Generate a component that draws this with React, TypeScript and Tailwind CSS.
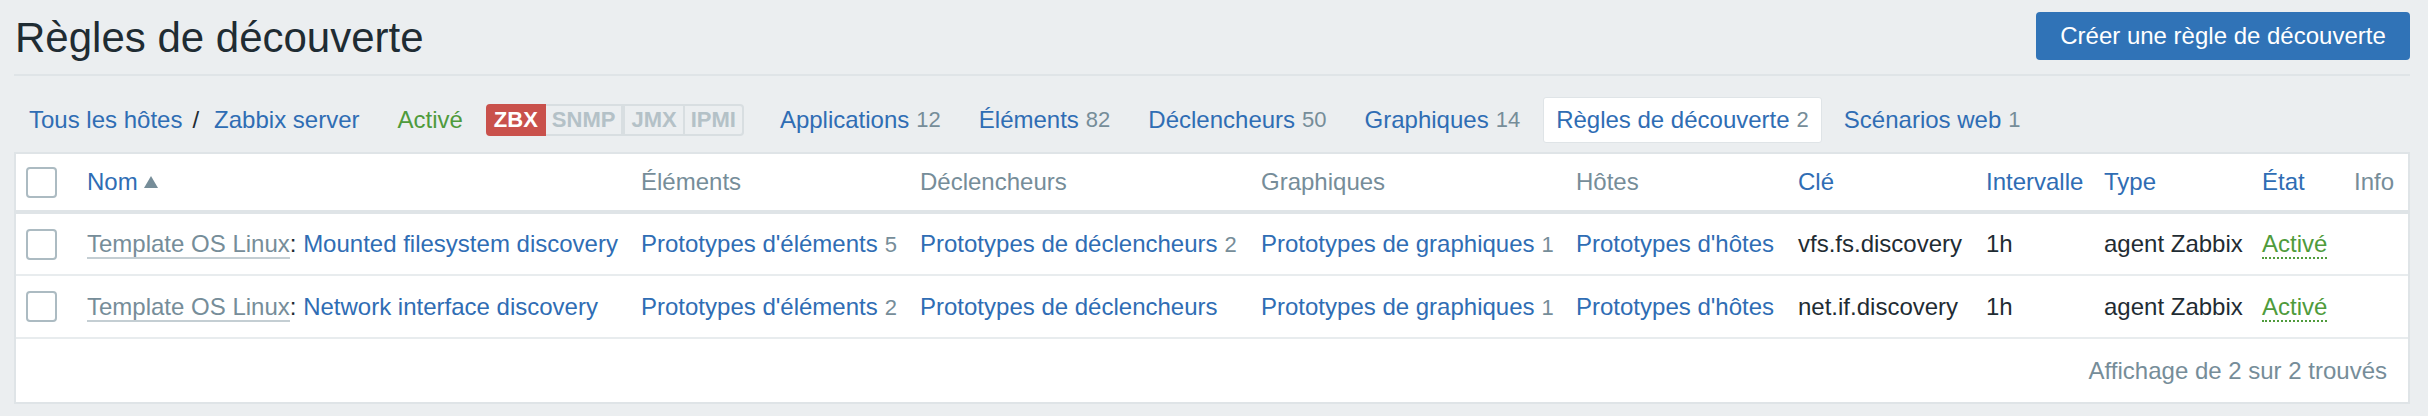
import type { FC, ReactNode } from 'react'

const font = { fontFamily: '"Liberation Sans", Arial, Helvetica, sans-serif' }

interface NavItemProps {
  label: string
  count?: number
  active?: boolean
  className?: string
}

const NavItem: FC<NavItemProps> = ({ label, count, active, className = '' }) => (
  <span
    className={`flex items-center h-[46px] px-[12px] border rounded-[3px] ${
      active ? 'bg-white border-[#dfe4e7]' : 'border-transparent'
    } ${className}`}
  >
    <span className="text-[#2f6db4]">{label}</span>
    {count !== undefined && <span className="ml-[7px] text-[22px] text-[#768d99]">{count}</span>}
  </span>
)

const Checkbox: FC = () => (
  <span className="block w-[31px] h-[31px] border-2 border-[#acbbc2] rounded-[4px] bg-white" />
)

const Link: FC<{ children: ReactNode; count?: number }> = ({ children, count }) => (
  <>
    <span className="text-[#2f6db4]">{children}</span>
    {count !== undefined && <span className="ml-[7px] text-[22px] text-[#768d99]">{count}</span>}
  </>
)

interface Rule {
  name: string
  items: number
  triggers?: number
  graphs: number
  key: string
}

const rules: Rule[] = [
  { name: 'Mounted filesystem discovery', items: 5, triggers: 2, graphs: 1, key: 'vfs.fs.discovery' },
  { name: 'Network interface discovery', items: 2, graphs: 1, key: 'net.if.discovery' },
]

export default function App() {
  return (
    <div style={font} className="min-h-[416px] bg-[#ebeef0] pl-[14px] pr-[18px] pb-[13px] text-[24px] text-[#1f2c33]">
      {/* Header */}
      <div className="flex items-start justify-between h-[76px] border-b-2 border-[#dfe4e7]">
        <h1 className="mt-[14px] ml-[1px] text-[42px] leading-[48px] font-normal">Règles de découverte</h1>
        <button className="mt-[12px] h-[48px] w-[374px] rounded-[4px] bg-[#3073b7] text-white text-[24px]">
          Créer une règle de découverte
        </button>
      </div>

      {/* Navigation */}
      <div className="flex items-center h-[76px] pt-[21px] pb-[9px] leading-[28px]">
        <span className="ml-[15px] text-[#2f6db4]">Tous les hôtes</span>
        <span className="ml-[10px] mr-[15px]">/</span>
        <span className="text-[#2f6db4]">Zabbix server</span>
        <span className="ml-[38px] text-[#4f9b3c]">Activé</span>
        <span className="ml-[23px] flex h-[32px] text-[22px] leading-[28px] font-bold">
          <span className="px-[6px] border-2 border-[#c9514c] bg-[#c9514c] text-white rounded-l-[4px]">ZBX</span>
          <span className="px-[6px] border-2 border-l-0 border-[#d8dee1] text-[#b4c1c7]">SNMP</span>
          <span className="px-[6px] border-2 border-l-2 border-[#d8dee1] text-[#b4c1c7]">JMX</span>
          <span className="px-[6px] border-2 border-l-0 border-[#d8dee1] text-[#b4c1c7] rounded-r-[4px]">IPMI</span>
        </span>
        <NavItem className="ml-[23px]" label="Applications" count={12} />
        <NavItem className="ml-[12px]" label="Éléments" count={82} />
        <NavItem className="ml-[12px]" label="Déclencheurs" count={50} />
        <NavItem className="ml-[12px]" label="Graphiques" count={14} />
        <NavItem className="ml-[10px]" label="Règles de découverte" count={2} active />
        <NavItem className="ml-[9px]" label="Scénarios web" count={1} />
      </div>

      {/* Table */}
      <div className="bg-white border-2 border-[#dfe4e7]">
        <table className="w-full table-fixed border-collapse">
          <colgroup>
            <col className="w-[61px]" />
            <col className="w-[554px]" />
            <col className="w-[279px]" />
            <col className="w-[341px]" />
            <col className="w-[315px]" />
            <col className="w-[222px]" />
            <col className="w-[188px]" />
            <col className="w-[118px]" />
            <col className="w-[158px]" />
            <col className="w-[92px]" />
            <col />
          </colgroup>
          <thead>
            <tr className="h-[58px] border-b-4 border-[#dfe4e7] text-left">
              <th className="px-[10px] font-normal"><Checkbox /></th>
              <th className="px-[10px] font-normal text-[#2f6db4] whitespace-nowrap">
                Nom
                <svg className="inline-block ml-[6px] mb-[3px]" width="14" height="12" viewBox="0 0 14 12">
                  <polygon points="7,0 14,12 0,12" fill="#768d99" />
                </svg>
              </th>
              <th className="px-[10px] font-normal text-[#768d99]">Éléments</th>
              <th className="px-[10px] font-normal text-[#768d99]">Déclencheurs</th>
              <th className="px-[10px] font-normal text-[#768d99]">Graphiques</th>
              <th className="px-[10px] font-normal text-[#768d99]">Hôtes</th>
              <th className="px-[10px] font-normal text-[#2f6db4]">Clé</th>
              <th className="px-[10px] font-normal text-[#2f6db4]">Intervalle</th>
              <th className="px-[10px] font-normal text-[#2f6db4]">Type</th>
              <th className="px-[10px] font-normal text-[#2f6db4]">État</th>
              <th className="px-[10px] font-normal text-[#768d99]">Info</th>
            </tr>
          </thead>
          <tbody>
            {rules.map((rule) => (
              <tr key={rule.key} className="h-[63px] border-b-2 border-[#e8ecee] whitespace-nowrap">
                <td className="px-[10px]"><Checkbox /></td>
                <td className="px-[10px]">
                  <span className="text-[#768d99] border-b-2 border-[#c4ced3]">Template OS Linux</span>
                  <span>: </span>
                  <span className="text-[#2f6db4]">{rule.name}</span>
                </td>
                <td className="px-[10px]"><Link count={rule.items}>Prototypes d'éléments</Link></td>
                <td className="px-[10px]"><Link count={rule.triggers}>Prototypes de déclencheurs</Link></td>
                <td className="px-[10px]"><Link count={rule.graphs}>Prototypes de graphiques</Link></td>
                <td className="px-[10px]"><Link>Prototypes d'hôtes</Link></td>
                <td className="px-[10px]">{rule.key}</td>
                <td className="px-[10px]">1h</td>
                <td className="px-[10px]">agent Zabbix</td>
                <td className="px-[10px]">
                  <span className="text-[#4f9b3c] border-b-2 border-dotted border-[#4f9b3c]">Activé</span>
                </td>
                <td className="px-[10px]" />
              </tr>
            ))}
          </tbody>
        </table>
        <div className="flex items-center justify-end h-[63px] pr-[21px] text-[#768d99]">
          Affichage de 2 sur 2 trouvés
        </div>
      </div>
    </div>
  )
}
